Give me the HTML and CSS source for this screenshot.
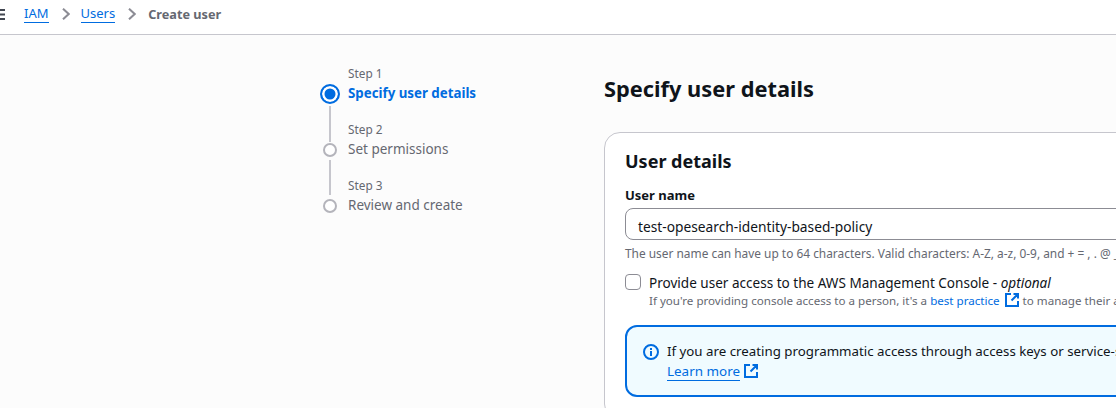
FILE: index.html
```html
<!DOCTYPE html>
<html lang="en">
<head>
<meta charset="utf-8">
<title>Create user</title>
<link rel="stylesheet" href="styles.css">
</head>
<body>
<header class="topbar">
  <svg class="menu" width="6" height="14" viewBox="0 0 6 14"><path d="M0 3h5M0 7.500h5M0 12h5" stroke="#424650" stroke-width="2" fill="none"/></svg>
  <a class="crumb" href="#">IAM</a>
  <svg class="chev" width="8" height="12" viewBox="0 0 8 12"><path d="M1 .7l5.700 5.300L1 11.300" stroke="#8c8c94" stroke-width="2" fill="none"/></svg>
  <a class="crumb" href="#">Users</a>
  <svg class="chev" width="8" height="12" viewBox="0 0 8 12"><path d="M1 .7l5.700 5.300L1 11.300" stroke="#8c8c94" stroke-width="2" fill="none"/></svg>
  <span class="current">Create user</span>
</header>
<div class="page">
  <nav class="steps">
    <div class="step">
      <div class="rail"><span class="dot active"></span><span class="line"></span></div>
      <div class="step-text"><div class="step-num">Step 1</div><div class="step-name active-name">Specify user details</div></div>
    </div>
    <div class="step">
      <div class="rail"><span class="dot"></span><span class="line"></span></div>
      <div class="step-text"><div class="step-num">Step 2</div><div class="step-name">Set permissions</div></div>
    </div>
    <div class="step">
      <div class="rail"><span class="dot"></span></div>
      <div class="step-text"><div class="step-num">Step 3</div><div class="step-name">Review and create</div></div>
    </div>
  </nav>
  <main class="main">
    <h1 class="title">Specify user details</h1>
    <section class="card">
      <h2 class="card-title">User details</h2>
      <div class="label">User name</div>
      <div class="input">test-opesearch-identity-based-policy</div>
      <div class="hint">The user name can have up to 64 characters. Valid characters: A-Z, a-z, 0-9, and + = , . @ _ - (hyphen)</div>
      <div class="check-row">
        <span class="checkbox"></span>
        <div>
          <div class="check-label">Provide user access to the AWS Management Console - <i>optional</i></div>
          <div class="check-desc">If you're providing console access to a person, it's a <a class="inline-link" href="#">best practice</a><svg class="ext small" width="16" height="16" viewBox="0 0 16 16"><path d="M7 2H2v12h12V9M9.500 2H14v4.500M14 2L7.500 8.500" stroke="#006ce0" stroke-width="2" fill="none"/></svg> to manage their access in IAM Identity Center.</div>
        </div>
      </div>
      <div class="alert">
        <svg class="info" width="16" height="16" viewBox="0 0 16 16"><circle cx="8" cy="8" r="7" stroke="#006ce0" stroke-width="2" fill="none"/><path d="M8 7v5M8 4v2" stroke="#006ce0" stroke-width="2" fill="none"/></svg>
        <div class="alert-body">
          <div class="alert-text">If you are creating programmatic access through access keys or service-specific credentials for AWS CodeCommit or Amazon Keyspaces, generate them after you create this IAM user.</div>
          <div class="alert-link"><a class="learn" href="#">Learn more</a><svg class="ext tight" width="16" height="16" viewBox="0 0 16 16"><path d="M7 2H2v12h12V9M9.500 2H14v4.500M14 2L7.500 8.500" stroke="#006ce0" stroke-width="2" fill="none"/></svg></div>
        </div>
      </div>
    </section>
  </main>
</div>
</body>
</html>
```
FILE: styles.css
```css
* { box-sizing: border-box; }
html, body { margin: 0; height: 408px; overflow: hidden; }
body { width: 1116px; background: #fcfcfc; font-family: "Noto Sans", sans-serif; font-size: 14px; line-height: 20px; color: #0f141a; }
a { color: #006ce0; text-decoration: none; }
.topbar { height: 35px; padding-bottom: 7px; background: #fff; border-bottom: 1px solid #c6c6cd; display: flex; align-items: center; }
.menu { margin-right: 18px; }
.crumb { font-size: 13px; line-height: 17px; border-bottom: 1px solid #006ce0; }
.chev { margin: 0 11px 0 13px; }
.current { font-weight: 700; font-size: 12.700px; color: #656871; margin-left: 1px; }
.page { display: flex; padding: 30px 0 0 320px; }
.steps { width: 284px; flex: none; }
.step { display: flex; height: 56px; }
.rail { width: 20px; margin-right: 8px; position: relative; display: flex; flex-direction: column; align-items: center; padding-top: 19px; }
.dot { flex: none; width: 14px; height: 14px; margin-top: 3px; border: 2px solid #b4b4bb; border-radius: 50%; background: #fff; }
.dot.active { width: 20px; height: 20px; margin-top: 0; border-color: #006ce0; border-width: 2px; background: #006ce0; box-shadow: inset 0 0 0 2.500px #fff; }
.line { flex: none; width: 2px; height: 36px; background: #c6c6cd; margin-top: 2px; }
.step:nth-child(2) .line { height: 35px; margin-top: 3px; }
.step-num { font-size: 11.800px; line-height: 15px; padding-top: 1px; height: 17px; color: #656871; }
.step-name { font-size: 13.500px; line-height: 22px; color: #656871; }
.active-name { font-weight: 700; color: #006ce0; font-size: 13.300px; }
.main { width: 800px; flex: none; }
.title { margin: 8px 0 0; font-size: 21.800px; line-height: 32px; font-weight: 700; }
.card { margin-top: 27px; height: 288px; padding: 16px 20px; background: #fff; border: 1px solid #c6c6cd; border-radius: 16px; }
.card-title { margin: 0; font-size: 18px; line-height: 24px; font-weight: 700; }
.label { margin-top: 13px; font-size: 13px; line-height: 18px; font-weight: 700; }
.input { margin-top: 4px; height: 32px; width: 760px; padding: 0 12px; line-height: 35px; font-size: 13.750px; border: 1px solid #8c8c94; border-radius: 8px; background: #fff; }
.hint { margin-top: 5px; font-size: 11.900px; line-height: 16px; color: #656871; white-space: nowrap; }
.check-row { display: flex; margin-top: 11px; gap: 8px; white-space: nowrap; }
.checkbox { flex: none; width: 16px; height: 16px; margin-top: 2px; border: 1px solid #8c8c94; border-radius: 4px; background: #fff; }
.check-label { font-size: 13.560px; line-height: 22px; margin-bottom: -2px; }
.check-desc { font-size: 11.600px; line-height: 16px; color: #656871; }
.inline-link { color: #006ce0; }
.ext { vertical-align: -3px; margin-left: 4px; }
.ext.tight { margin-left: 3px; }
.alert { display: flex; gap: 8px; margin-top: 16px; width: 760px; height: 72px; padding: 14px 16px; border: 2px solid #006ce0; border-radius: 12px; background: #f0fbff; white-space: nowrap; overflow: hidden; font-size: 13.450px; }
.alert-text { font-size: 13.300px; }
.info { flex: none; margin-top: 3px; }
.learn { border-bottom: 1px solid #006ce0; }
.alert-link { line-height: 20px; }
```
